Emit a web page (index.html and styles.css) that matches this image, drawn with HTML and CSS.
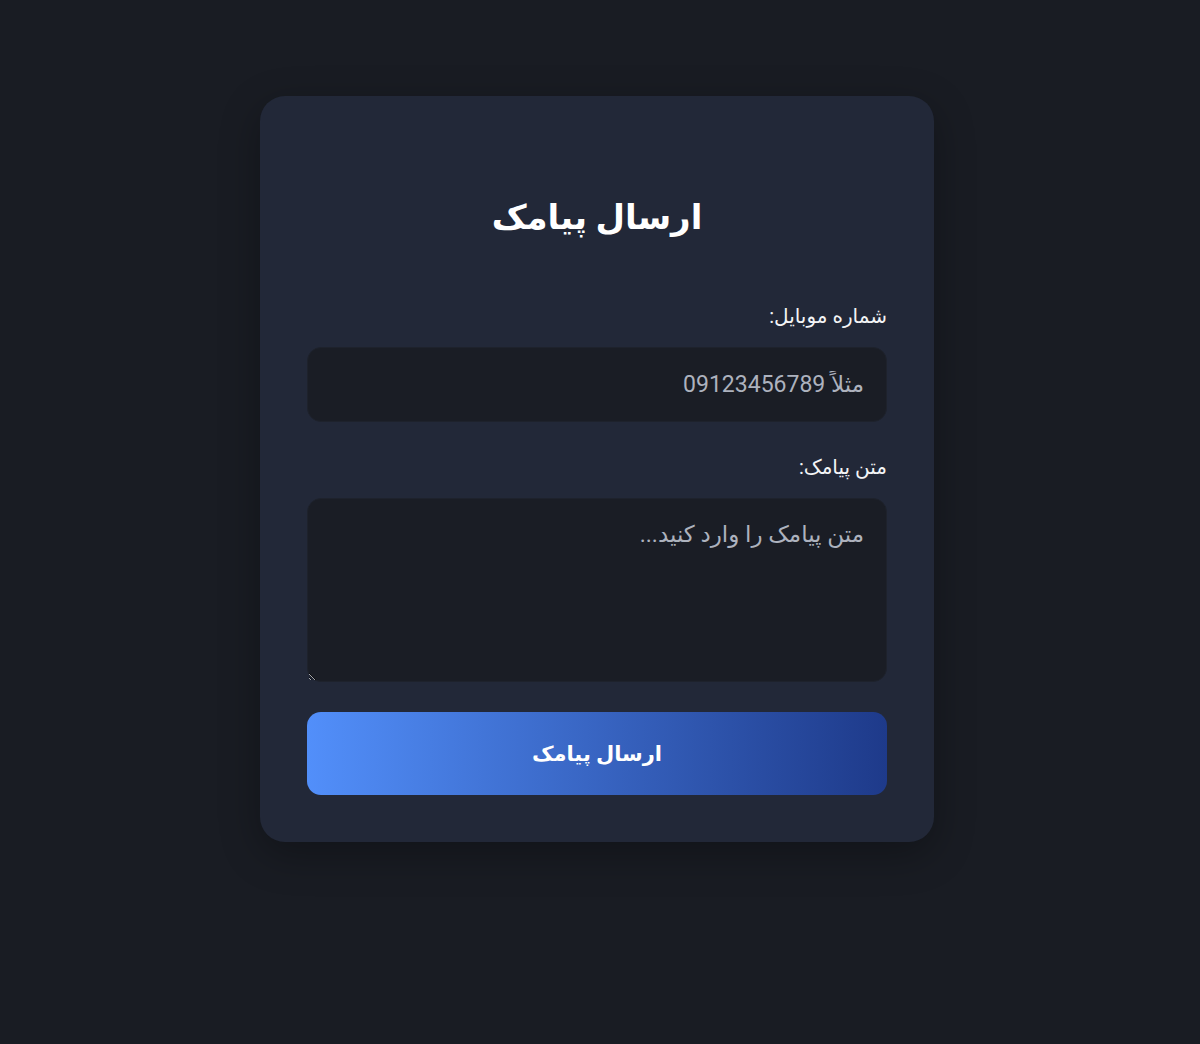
FILE: index.html
```html
<!DOCTYPE html>
<html lang="fa" dir="rtl">

<head>
    <meta charset="UTF-8">
    <link rel="stylesheet" href="styles.css">
    <title>ارسال پیامک</title>
    <meta name="viewport" content="width=device-width, initial-scale=1">
</head>

<body>
    <div class="wrapper">
        <div class="card">
            <h1 class="title">ارسال پیامک</h1>
            <form class="smsForm" onsubmit="return false;">
                <div class="formGroup">
                    <label for="phone" class="label">شماره موبایل:</label>
                    <input id="phone" class="input" type="text" placeholder="مثلاً 09123456789">
                </div>
                <div class="formGroup">
                    <label for="message" class="label">متن پیامک:</label>
                    <textarea id="message" class="input textarea" placeholder="متن پیامک را وارد کنید..."></textarea>
                </div>
                <button type="submit" class="sendButton">ارسال پیامک</button>
            </form>
        </div>
    </div>
</body>

</html>
```

FILE: styles.css
```css
body {
    margin: 0;
    min-height: 100vh;
    background: #191c23;
    color: #f3f4f6;
    font-family: Roboto, "Noto Sans", "DejaVu Sans", sans-serif;
}

.wrapper {
    display: flex;
    justify-content: center;
    padding: 96px 6px 0 0;
}

.card {
    width: 674px;
    box-sizing: border-box;
    padding: 47px;
    background: #222838;
    border-radius: 25px;
    box-shadow: 0 12px 40px rgba(0, 0, 0, 0.3);
}

.title {
    margin: 49px 0 58px;
    font-size: 34px;
    line-height: 51px;
    font-weight: 700;
    text-align: center;
    color: #ffffff;
}

.formGroup {
    margin-bottom: 30px;
}

.label {
    display: block;
    margin-bottom: 16px;
    font-size: 20px;
    line-height: 30px;
    color: #f3f4f6;
}

.input {
    display: block;
    width: 100%;
    box-sizing: border-box;
    height: 75px;
    padding: 20px 22px;
    background: #1a1d25;
    border: 1px solid #1e222c;
    border-radius: 14px;
    color: #e5e7eb;
    font-family: inherit;
    font-size: 23px;
    line-height: 33px;
    outline: none;
}

.input::placeholder {
    color: #adb2be;
}

.textarea {
    height: 184px;
    padding-top: 19px;
    resize: vertical;
}

.sendButton {
    display: block;
    width: 100%;
    height: 83px;
    border: none;
    border-radius: 14px;
    background: linear-gradient(to right, #528ffa, #1e3a8a);
    color: #ffffff;
    font-family: inherit;
    font-size: 21px;
    font-weight: 700;
    cursor: pointer;
}
```
